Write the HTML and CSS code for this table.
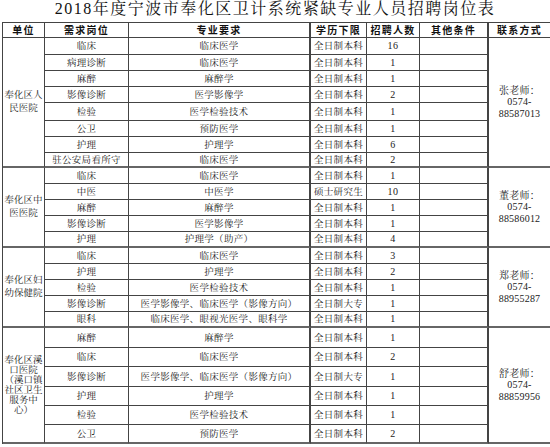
FILE: index.html
```html
<!DOCTYPE html>
<html lang="zh-CN">
<head>
<meta charset="utf-8">
<title>2018年度宁波市奉化区卫计系统紧缺专业人员招聘岗位表</title>
<link rel="stylesheet" href="styles.css">
</head>
<body>
<h1 class="title">2018年度宁波市奉化区卫计系统紧缺专业人员招聘岗位表</h1>
<div class="sheet">
  <div class="c h">单位</div>
  <div class="c h">需求岗位</div>
  <div class="c h tk">专业要求</div>
  <div class="c h">学历下限</div>
  <div class="c h">招聘人数</div>
  <div class="c h tk">其他条件</div>
  <div class="c h">联系方式</div>

  <div class="c unit s8 end">奉化区人<br>民医院</div>
  <div class="c">临床</div><div class="c tk">临床医学</div><div class="c">全日制本科</div><div class="c n">16</div><div class="c tk"></div>
  <div class="c contact s8 end">张老师：<br>0574-<br>88587013</div>
  <div class="c">病理诊断</div><div class="c tk">临床医学</div><div class="c">全日制本科</div><div class="c n">1</div><div class="c tk"></div>
  <div class="c">麻醉</div><div class="c tk">麻醉学</div><div class="c">全日制本科</div><div class="c n">1</div><div class="c tk"></div>
  <div class="c">影像诊断</div><div class="c tk">医学影像学</div><div class="c">全日制本科</div><div class="c n">2</div><div class="c tk"></div>
  <div class="c">检验</div><div class="c tk">医学检验技术</div><div class="c">全日制本科</div><div class="c n">1</div><div class="c tk"></div>
  <div class="c">公卫</div><div class="c tk">预防医学</div><div class="c">全日制本科</div><div class="c n">1</div><div class="c tk"></div>
  <div class="c">护理</div><div class="c tk">护理学</div><div class="c">全日制本科</div><div class="c n">6</div><div class="c tk"></div>
  <div class="c end">驻公安局看所守</div><div class="c tk end">临床医学</div><div class="c end">全日制本科</div><div class="c n end">2</div><div class="c tk end"></div>

  <div class="c unit s5 end">奉化区中<br>医医院</div>
  <div class="c">临床</div><div class="c tk">临床医学</div><div class="c">全日制本科</div><div class="c n">1</div><div class="c tk"></div>
  <div class="c contact s5 end">董老师：<br>0574-<br>88586012</div>
  <div class="c">中医</div><div class="c tk">中医学</div><div class="c">硕士研究生</div><div class="c n">10</div><div class="c tk"></div>
  <div class="c">麻醉</div><div class="c tk">麻醉学</div><div class="c">全日制本科</div><div class="c n">1</div><div class="c tk"></div>
  <div class="c">影像诊断</div><div class="c tk">医学影像学</div><div class="c">全日制本科</div><div class="c n">1</div><div class="c tk"></div>
  <div class="c end">护理</div><div class="c tk end">护理学（助产）</div><div class="c end">全日制本科</div><div class="c n end low">4</div><div class="c tk end"></div>

  <div class="c unit s5 end">奉化区妇<br>幼保健院</div>
  <div class="c">临床</div><div class="c tk">临床医学</div><div class="c">全日制本科</div><div class="c n">3</div><div class="c tk"></div>
  <div class="c contact s5 end">郑老师：<br>0574-<br>88955287</div>
  <div class="c">护理</div><div class="c tk">护理学</div><div class="c">全日制本科</div><div class="c n">2</div><div class="c tk"></div>
  <div class="c">检验</div><div class="c tk">医学检验技术</div><div class="c">全日制本科</div><div class="c n">1</div><div class="c tk"></div>
  <div class="c">影像诊断</div><div class="c tk">医学影像学、临床医学（影像方向）</div><div class="c">全日制大专</div><div class="c n">1</div><div class="c tk"></div>
  <div class="c end">眼科</div><div class="c tk end">临床医学、眼视光医学、眼科学</div><div class="c end">全日制本科</div><div class="c n end">1</div><div class="c tk end"></div>

  <div class="c unit tight s6 end">奉化区溪<br>口医院<br>（溪口镇<br>社区卫生<br>服务中<br>心）</div>
  <div class="c">麻醉</div><div class="c tk">麻醉学</div><div class="c">全日制本科</div><div class="c n">1</div><div class="c tk"></div>
  <div class="c contact s6 end">舒老师：<br>0574-<br>88859956</div>
  <div class="c">临床</div><div class="c tk">临床医学</div><div class="c">全日制本科</div><div class="c n">2</div><div class="c tk"></div>
  <div class="c">影像诊断</div><div class="c tk">医学影像学、临床医学（影像方向）</div><div class="c">全日制大专</div><div class="c n">1</div><div class="c tk"></div>
  <div class="c">护理</div><div class="c tk">护理学</div><div class="c">全日制本科</div><div class="c n">1</div><div class="c tk"></div>
  <div class="c">检验</div><div class="c tk">医学检验技术</div><div class="c">全日制本科</div><div class="c n">1</div><div class="c tk"></div>
  <div class="c end">公卫</div><div class="c tk end">预防医学</div><div class="c end">全日制本科</div><div class="c n end">2</div><div class="c tk end"></div>
</div>
</body>
</html>
```

FILE: styles.css
```css
html, body {
  margin: 0;
  padding: 0;
  background: #fff;
}

body {
  width: 550px;
  height: 447px;
  overflow: hidden;
  font-family: "Liberation Serif", "Noto Serif CJK SC", "Noto Sans CJK SC", serif;
  color: #222;
}

.title {
  margin: 0;
  height: 22px;
  font-size: 16px;
  line-height: 18px;
  font-weight: normal;
  text-align: center;
  letter-spacing: 1.5px;
  color: #111;
}

.sheet {
  display: grid;
  margin-left: 2px;
  width: 549px;
  grid-template-columns: 42px 84px 182px 56px 53px 69px 62px;
  grid-template-rows:
    15px
    17px 16px 16px 16px 18px 16px 16px 15px
    16px 16px 16px 16px 16px
    16px 16px 16px 16px 16px
    20px 19px 20px 19px 19px 19px;
  border-left: 1px solid #444;
  border-top: 1px solid #444;
}

.c {
  box-sizing: border-box;
  border-right: 1px solid #444;
  border-bottom: 1px solid #444;
  display: flex;
  align-items: center;
  justify-content: center;
  text-align: center;
  font-size: 9.5px;
  letter-spacing: 0.3px;
  line-height: 12px;
  white-space: nowrap;
  overflow: hidden;
}

.tk {
  border-right-width: 2px;
}

.end {
  border-bottom: 2px solid #666;
}

.h {
  font-family: "Noto Sans CJK SC", sans-serif;
  font-weight: bold;
  font-size: 10px;
  letter-spacing: 1.2px;
  color: #111;
}

.n {
  font-size: 10px;
  letter-spacing: 0.5px;
}

.low {
  align-items: flex-end;
  padding-bottom: 1px;
}

.s8 { grid-row: span 8; }
.s5 { grid-row: span 5; }
.s6 { grid-row: span 6; }

.unit {
  line-height: 13px;
  letter-spacing: 0;
  font-size: 9.5px;
}

.unit.tight {
  line-height: 10px;
}

.contact {
  font-size: 10px;
  line-height: 11.5px;
  letter-spacing: 0.2px;
}
```
